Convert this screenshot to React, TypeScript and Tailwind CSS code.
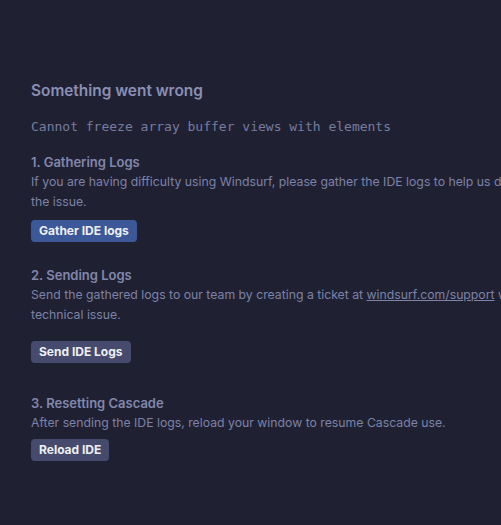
export default function App() {
  return (
    <div className="min-h-[525px] w-full overflow-hidden bg-[#1f2133] font-['Inter',sans-serif] text-[12.25px] text-[#7d82a6]">
      <div className="pl-[31px] pt-[79px]">
        <h1 className="text-[15.4px] font-semibold leading-6 text-[#8a8fb3]">Something went wrong</h1>
        <p className="mt-[14px] font-['DejaVu_Sans_Mono',monospace] text-[13px] leading-5 text-[#777c9e]">
          Cannot freeze array buffer views with elements
        </p>

        <section className="mt-[15px]">
          <h2 className="text-[13px] font-semibold leading-5 text-[#8287ab]">1. Gathering Logs</h2>
          <p className="whitespace-nowrap leading-5">
            If you are having difficulty using Windsurf, please gather the IDE logs to help us diagnose
            <br />
            the issue.
          </p>
          <button className="mt-2 rounded-[4px] bg-[#3c5898] px-2 py-[3px] text-[12px] font-bold leading-4 text-[#eef0f7]">
            Gather IDE logs
          </button>
        </section>

        <section className="mt-[23px]">
          <h2 className="text-[13px] font-semibold leading-5 text-[#8287ab]">2. Sending Logs</h2>
          <p className="whitespace-nowrap leading-5">
            Send the gathered logs to our team by creating a ticket at{" "}
            <a className="underline">windsurf.com/support</a> with your
            <br />
            technical issue.
          </p>
          <button className="mt-4 rounded-[4px] bg-[#464a6d] px-2 py-[3px] text-[12px] font-bold leading-4 text-[#eef0f7]">
            Send IDE Logs
          </button>
        </section>

        <section className="mt-[31px]">
          <h2 className="text-[13px] font-semibold leading-[19px] text-[#8287ab]">3. Resetting Cascade</h2>
          <p className="leading-[19px]">After sending the IDE logs, reload your window to resume Cascade use.</p>
          <button className="mt-[7px] rounded-[4px] bg-[#464a6d] px-2 py-[3px] text-[12px] font-bold leading-4 text-[#eef0f7]">
            Reload IDE
          </button>
        </section>
      </div>
    </div>
  );
}
